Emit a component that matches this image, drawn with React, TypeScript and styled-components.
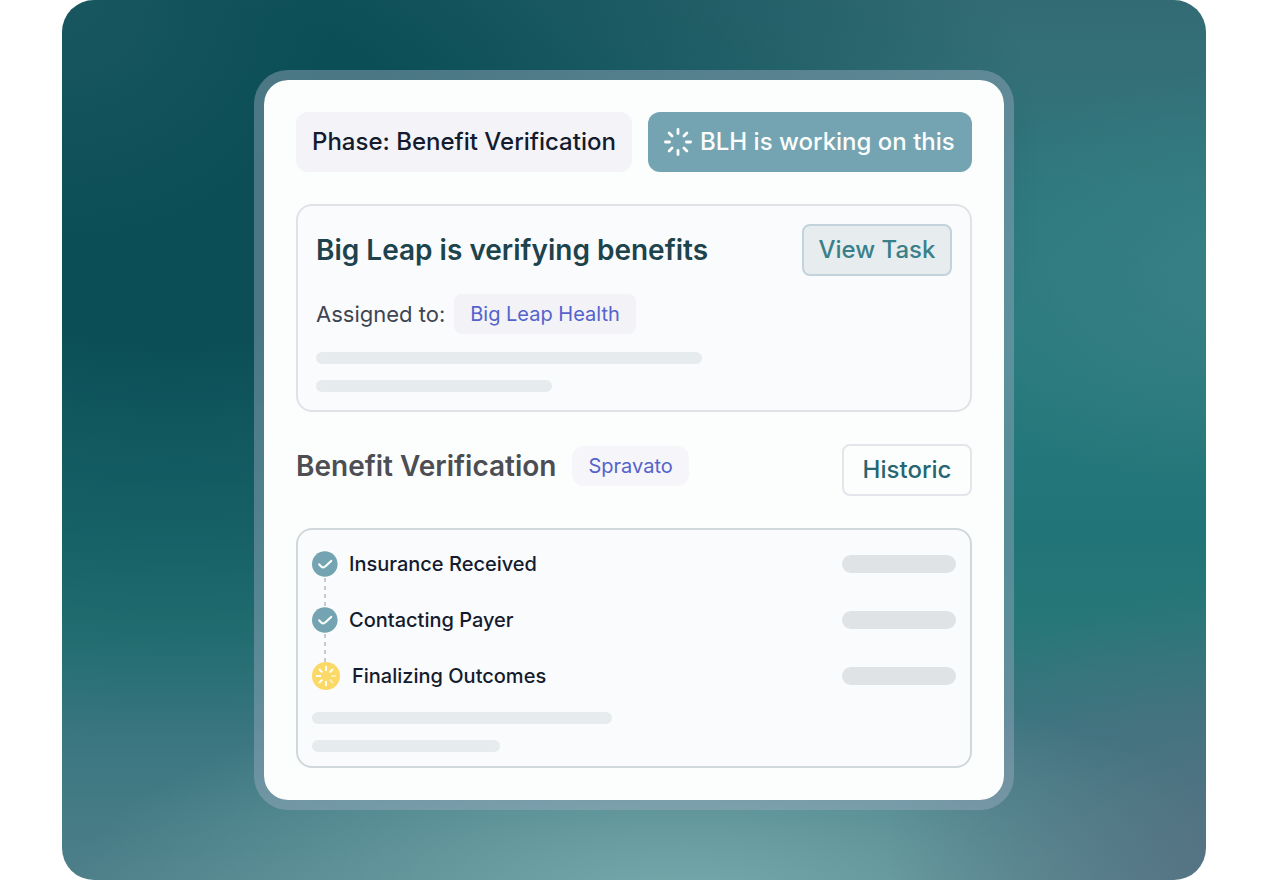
import React from "react";
import styled, { createGlobalStyle } from "styled-components";

const GlobalStyle = createGlobalStyle`
  *, *::before, *::after { box-sizing: border-box; }
  body {
    margin: 0;
    background: #ffffff;
    font-family: Inter, "Liberation Sans", sans-serif;
    color: #141b2e;
  }
  h2, p, ul { margin: 0; padding: 0; }
  button { font-family: inherit; cursor: pointer; }
`;

const Stage = styled.main`
  min-height: 100vh;
  margin: 0 62px;
  padding: 32px;
  display: flex;
  align-items: center;
  justify-content: center;
  border-radius: 32px;
  background:
    radial-gradient(ellipse 32% 32% at 104% 98%, rgba(86, 110, 128, 0.85) 0%, rgba(86, 110, 128, 0) 100%),
    radial-gradient(ellipse 54% 26% at 54% 103%, #76aaac 0%, rgba(118, 170, 172, 0) 100%),
    radial-gradient(ellipse 24% 28% at 0% 0%, #195760 0%, rgba(25, 87, 96, 0) 100%),
    radial-gradient(ellipse 76% 64% at 10% 20%, #0b4e56 0%, #0b4e56 30%, rgba(11, 78, 86, 0) 100%),
    radial-gradient(ellipse 30% 24% at 104% 32%, #398085 0%, rgba(57, 128, 133, 0) 100%),
    linear-gradient(to bottom, #336b74 0%, #346f77 8%, #2c797e 24%, #277a7d 42%, #217477 60%, #267778 70%, #3a7680 83%, #4d7f89 100%);
`;

const Panel = styled.section`
  flex: 0 1 760px;
  display: flex;
  flex-direction: column;
  gap: 32px;
  padding: 32px;
  border: 10px solid rgba(160, 175, 194, 0.43);
  border-radius: 34px;
  background: #fcfefd;
  background-clip: padding-box;
`;

const StatusRow = styled.header`
  display: grid;
  grid-template-columns: 336fr 324fr;
  gap: 16px;
`;

const StatusChip = styled.p<{ $active?: boolean }>`
  display: flex;
  align-items: center;
  gap: 8px;
  height: 60px;
  padding: 0 16px;
  border-radius: 12px;
  font-size: 24px;
  font-weight: 500;
  line-height: 32px;
  white-space: nowrap;
  color: ${(p) => (p.$active ? "#fcfefd" : "#141b2e")};
  background: ${(p) => (p.$active ? "#74a4b2" : "#f3f3f8")};
`;

const Card = styled.section<{ $strong?: boolean }>`
  display: flex;
  flex-direction: column;
  gap: ${(p) => (p.$strong ? 22 : 18)}px;
  padding: ${(p) => (p.$strong ? "20px 14px 14px" : "18px")};
  border: 2px solid ${(p) => (p.$strong ? "#d0d8db" : "#e1e2e7")};
  border-radius: 16px;
  background: #fafbfc;
`;

const SplitRow = styled.div<{ $top?: boolean }>`
  display: flex;
  align-items: ${(p) => (p.$top ? "flex-start" : "center")};
  justify-content: space-between;
`;

const TitleGroup = styled.div`
  display: flex;
  align-items: center;
  gap: 16px;
  height: 44px;
`;

const Title = styled.h2<{ $muted?: boolean }>`
  font-size: 28px;
  font-weight: 600;
  line-height: 36px;
  color: ${(p) => (p.$muted ? "#4d4e54" : "#1d434d")};
`;

const ActionButton = styled.button<{ $filled?: boolean }>`
  min-width: ${(p) => (p.$filled ? 150 : 130)}px;
  height: 52px;
  padding: 0 12px;
  border: 2px solid ${(p) => (p.$filled ? "#c2d3db" : "#e4e5ea")};
  border-radius: 8px;
  font-size: 24px;
  font-weight: 500;
  line-height: 32px;
  color: ${(p) => (p.$filled ? "#39808a" : "#276670")};
  background: ${(p) => (p.$filled ? "#e7ecee" : "#fcfefd")};
`;

const Assignee = styled.div`
  display: flex;
  align-items: center;
  gap: 9px;
  font-size: 22px;
  line-height: 28px;
  color: #3f4452;
`;

const Tag = styled.span<{ $round?: boolean }>`
  display: flex;
  align-items: center;
  height: 40px;
  padding: 0 16px;
  border-radius: ${(p) => (p.$round ? 12 : 8)}px;
  font-size: 20px;
  line-height: 24px;
  color: #5463cb;
  background: ${(p) => (p.$round ? "#f5f5fa" : "#f2f2f7")};
`;

const Lines = styled.div`
  display: flex;
  flex-direction: column;
  gap: 16px;
`;

const Line = styled.div<{ $width: number }>`
  width: ${(p) => p.$width}px;
  max-width: 100%;
  height: 12px;
  border-radius: 6px;
  background: #e6ebed;
`;

const Steps = styled.ul`
  list-style: none;
`;

const StepRow = styled.div`
  display: flex;
  align-items: center;
  gap: 12px;
  height: 28px;
`;

const StepName = styled.span`
  flex: 1;
  font-size: 20px;
  font-weight: 500;
  line-height: 28px;
`;

const StepValue = styled.span`
  width: 114px;
  height: 18px;
  border-radius: 9px;
  background: #e0e3e6;
`;

const Connector = styled.div`
  width: 2px;
  height: 28px;
  margin-left: 12px;
  background: repeating-linear-gradient(to bottom, #c8cace 0 4px, transparent 4px 8px);
`;

const Icon = styled.svg`
  flex: none;
  display: block;
`;

const ANGLES = [0, 45, 90, 135, 180, 225, 270, 315];

const Spinner = () => (
  <Icon width="28" height="28" viewBox="0 0 28 28" aria-hidden="true">
    <g stroke="#fcfefd" strokeWidth="2.8" strokeLinecap="round">
      {ANGLES.map((a) => (
        <line key={a} x1="14" y1="1.4" x2="14" y2="5.6" transform={`rotate(${a} 14 14)`} />
      ))}
    </g>
  </Icon>
);

const DoneMark = () => (
  <Icon width="25" height="26" viewBox="0 0 25 26" overflow="visible" aria-hidden="true">
    <circle cx="12.8" cy="13" r="12.8" fill="#74a4b2" />
    <path
      d="M7.2 13.4C8.6 15.1 10 16.5 11.3 16.5S15.4 13.3 19.2 10"
      fill="none"
      stroke="#fcfefd"
      strokeWidth="2.2"
      strokeLinecap="round"
    />
  </Icon>
);

const PendingMark = () => (
  <Icon width="28" height="28" viewBox="0 0 28 28" aria-hidden="true">
    <circle cx="14" cy="14" r="14" fill="#fad966" />
    <g stroke="#fffdf5" strokeWidth="2">
      {ANGLES.map((a) => (
        <line
          key={a}
          x1="14"
          y1="4"
          x2="14"
          y2="9"
          opacity={a === 90 || a === 135 ? 0.5 : 1}
          transform={`rotate(${a} 14 14)`}
        />
      ))}
    </g>
  </Icon>
);

const steps = [
  { name: "Insurance Received", done: true },
  { name: "Contacting Payer", done: true },
  { name: "Finalizing Outcomes", done: false },
];

export default function App() {
  return (
    <>
      <GlobalStyle />
      <Stage>
        <Panel>
          <StatusRow>
            <StatusChip>Phase: Benefit Verification</StatusChip>
            <StatusChip $active>
              <Spinner />
              BLH is working on this
            </StatusChip>
          </StatusRow>

          <Card>
            <SplitRow>
              <Title>Big Leap is verifying benefits</Title>
              <ActionButton type="button" $filled>
                View Task
              </ActionButton>
            </SplitRow>
            <Assignee>
              Assigned to: <Tag>Big Leap Health</Tag>
            </Assignee>
            <Lines>
              <Line $width={386} />
              <Line $width={236} />
            </Lines>
          </Card>

          <SplitRow $top>
            <TitleGroup>
              <Title $muted>Benefit Verification</Title>
              <Tag $round>Spravato</Tag>
            </TitleGroup>
            <ActionButton type="button">Historic</ActionButton>
          </SplitRow>

          <Card $strong>
            <Steps>
              {steps.map((step, i) => (
                <li key={step.name}>
                  <StepRow>
                    {step.done ? <DoneMark /> : <PendingMark />}
                    <StepName>{step.name}</StepName>
                    <StepValue />
                  </StepRow>
                  {i < steps.length - 1 && <Connector />}
                </li>
              ))}
            </Steps>
            <Lines>
              <Line $width={300} />
              <Line $width={188} />
            </Lines>
          </Card>
        </Panel>
      </Stage>
    </>
  );
}
